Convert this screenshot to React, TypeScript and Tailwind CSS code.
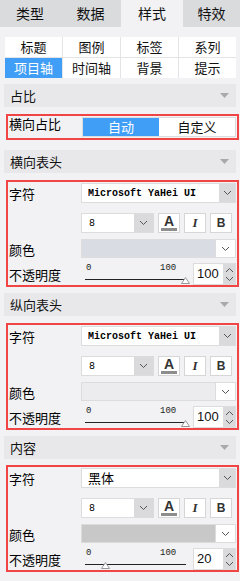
import React from 'react';

const cjk = { fontFamily: '"Noto Sans CJK SC", "Noto Sans", sans-serif' };
const mono = { fontFamily: '"Liberation Mono", "DejaVu Sans Mono", monospace' };

function Chevron({ className = '' }: { className?: string }) {
  return (
    <svg width="9" height="6" viewBox="0 0 9 6" className={className}>
      <path d="M1 1 L4.5 4.5 L8 1" fill="none" stroke="#555" strokeWidth="1" />
    </svg>
  );
}

function SectionHeader({ title, className = '' }: { title: string; className?: string }) {
  return (
    <div className={`mx-[4px] h-[23px] bg-[#e8e8ea] flex items-center justify-between pl-[6px] pr-[7px] ${className}`}>
      <span className="text-[13px] text-[#111]">{title}</span>
      <svg width="9" height="5" viewBox="0 0 9 5">
        <path d="M0 0 L9 0 L4.5 5 Z" fill="#a9a9ab" />
      </svg>
    </div>
  );
}

function Slider({ value }: { value: number }) {
  const left = value - 4;
  return (
    <div className="relative w-[104px] h-[22px]">
      <span className="absolute left-[1px] top-[1px] text-[9px] leading-none text-[#222]" style={mono}>0</span>
      <span className="absolute left-[75px] top-[1px] text-[9px] leading-none text-[#222]" style={mono}>100</span>
      <div className="absolute left-0 top-[16px] w-[101px] h-px bg-[#222]" />
      <svg width="9" height="7" viewBox="0 0 9 7" className="absolute top-[14px]" style={{ left }}>
        <path d="M0.5 6.5 L4.5 0.5 L8.5 6.5 Z" fill="#fff" stroke="#999" strokeWidth="1" />
      </svg>
    </div>
  );
}

function FontBox({ font, color, opacity, cn }: { font: string; color: string; opacity: number; cn?: boolean }) {
  return (
    <div className="ml-[6px] mr-px border-2 border-[#f14545] px-[1px] pt-[1px]">
      {/* 字符 */}
      <div className="flex h-[20px]">
        <div className="w-[72px] text-[13px] leading-[22px] text-black">字符</div>
        <div className="flex-1 flex bg-white border border-[#dcdcdc]">
          <div
            className={`flex-1 flex items-center pl-[6px] text-black ${cn ? 'text-[13px]' : 'text-[10px] font-bold'}`}
            style={cn ? cjk : mono}
          >
            {font}
          </div>
          <div className="w-[16px] bg-[#dadadc] flex items-center justify-center">
            <Chevron />
          </div>
        </div>
      </div>
      {/* size + buttons */}
      <div className="flex h-[20px] mt-[10px]">
        <div className="w-[72px]" />
        <div className="w-[73px] flex bg-white border border-[#dcdcdc]">
          <div className="flex-1 flex items-center pl-[7px] text-[10px] text-black" style={mono}>8</div>
          <div className="w-[19px] bg-[#dadadc] flex items-center justify-center">
            <Chevron />
          </div>
        </div>
        <div className="ml-[4px] w-[22px] bg-white border border-[#d6d6d6] flex flex-col items-center justify-center">
          <span className="text-[14px] font-bold leading-[12px] text-[#333]" style={{ fontFamily: '"Liberation Sans", sans-serif' }}>A</span>
          <div className="w-[16px] h-[3px] bg-[#8d8d8d] mt-[1px]" />
        </div>
        <div className="ml-[4px] w-[22px] bg-white border border-[#d6d6d6] flex items-center justify-center">
          <span className="text-[13px] font-bold italic text-[#333]" style={{ fontFamily: '"Liberation Serif", serif' }}>I</span>
        </div>
        <div className="ml-[4px] w-[22px] bg-white border border-[#d6d6d6] flex items-center justify-center">
          <span className="text-[12px] font-bold text-[#333]" style={{ fontFamily: '"Liberation Sans", sans-serif' }}>B</span>
        </div>
      </div>
      {/* 颜色 */}
      <div className="flex h-[19px] mt-[6px]">
        <div className="w-[72px] text-[13px] leading-[22px] text-black">颜色</div>
        <div className="flex-1 flex">
          <div className="flex-1 border border-[#dcdcdc]" style={{ background: color }} />
          <div className="w-[20px] bg-white border border-[#dcdcdc] border-l-0 flex items-center justify-center">
            <Chevron />
          </div>
        </div>
      </div>
      {/* 不透明度 */}
      <div className="flex h-[22px] mt-[5px]">
        <div className="w-[76px] text-[13px] leading-[24px] text-black">不透明度</div>
        <Slider value={opacity} />
        <div className="ml-[4px] flex-1 flex bg-white border border-[#dcdcdc]">
          <div className="flex-1 flex items-center pl-[3px] text-[13px] text-[#111]" style={{ fontFamily: '"Liberation Sans", sans-serif' }}>
            {opacity}
          </div>
          <div className="w-[12px] bg-[#dadadc] flex flex-col items-center justify-center gap-[3px]">
            <Chevron className="rotate-180" />
            <Chevron />
          </div>
        </div>
      </div>
    </div>
  );
}

export default function App() {
  const tabs = [
    { name: '类型', w: 'w-[60px]' },
    { name: '数据', w: 'w-[61px]' },
    { name: '样式', w: 'w-[62px]', active: true },
    { name: '特效', w: 'flex-1' },
  ];
  const sub = ['标题', '图例', '标签', '系列', '项目轴', '时间轴', '背景', '提示'];

  return (
    <div className="w-[240px] min-h-[581px] bg-[#f2f2f4] text-black" style={cjk}>
      <div className="flex h-[27px] bg-[#dadbdd]">
        {tabs.map(t => (
          <div
            key={t.name}
            className={`${t.w} flex items-center justify-center text-[14px] text-[#111] ${t.active ? 'bg-[#f2f2f4]' : ''}`}
          >
            {t.name}
          </div>
        ))}
      </div>

      <div className="mx-[5px] mt-[10px] mr-[4px] grid grid-cols-4 gap-px bg-[#e4e4e6]">
        {sub.map(s => (
          <div
            key={s}
            className={`h-[20px] flex items-center justify-center text-[13px] ${s === '项目轴' ? 'bg-[#419ef7] text-white' : 'bg-white text-[#111]'}`}
          >
            {s}
          </div>
        ))}
      </div>

      <SectionHeader title="占比" className="mt-[6px]" />

      <div className="ml-[6px] mr-px mt-[7px] border-2 border-[#f14545] h-[26px] flex">
        <div className="w-[74px] text-[13px] leading-[16px] pl-px text-black">横向占比</div>
        <div className="flex-1 flex my-[1px] mr-[1px] border border-[#dcdcdc]">
          <div className="w-[76px] bg-[#419ef7] text-white text-[13px] flex items-center justify-center">自动</div>
          <div className="flex-1 bg-white text-[#111] text-[13px] flex items-center justify-center">自定义</div>
        </div>
      </div>

      <SectionHeader title="横向表头" className="mt-[10px]" />
      <div className="mt-[7px]">
        <FontBox font="Microsoft YaHei UI" color="#d9dce3" opacity={100} />
      </div>

      <SectionHeader title="纵向表头" className="mt-[6px]" />
      <div className="mt-[7px]">
        <FontBox font="Microsoft YaHei UI" color="#ececee" opacity={100} />
      </div>

      <SectionHeader title="内容" className="mt-[6px]" />
      <div className="mt-[6px]">
        <FontBox font="黑体" color="#c8c8c8" opacity={20} cn />
      </div>
    </div>
  );
}
